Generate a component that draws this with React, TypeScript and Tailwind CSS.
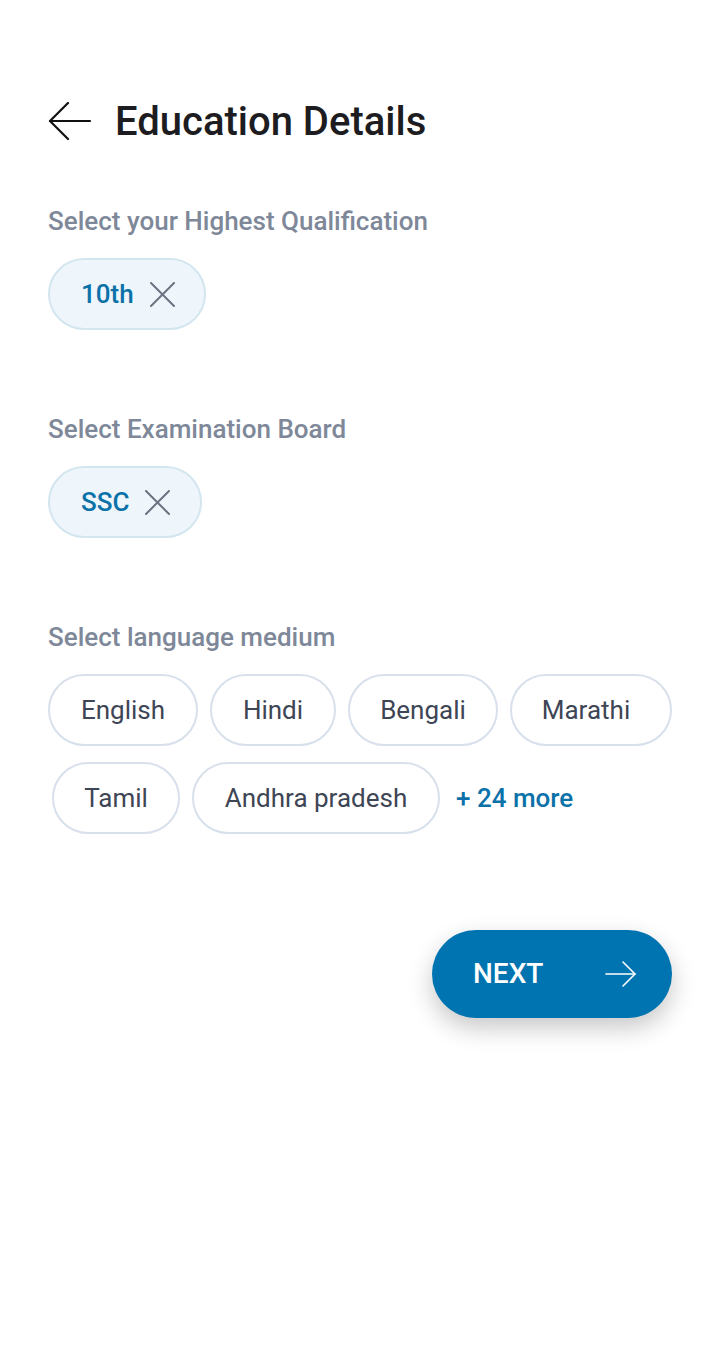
import React from 'react';

function BackArrow() {
  return (
    <svg width="44" height="40" viewBox="0 0 44 40" fill="none" stroke="#111" strokeWidth="2.2" strokeLinecap="round" strokeLinejoin="round">
      <path d="M42 19H2" />
      <path d="M20 1 2 19l18 18" />
    </svg>
  );
}

function CloseIcon() {
  return (
    <svg width="25" height="25" viewBox="0 0 25 25" fill="none" stroke="#6b7280" strokeWidth="2" strokeLinecap="round">
      <path d="M1 1l23 23M24 1 1 24" />
    </svg>
  );
}

function NextArrow() {
  return (
    <svg width="32" height="28" viewBox="0 0 32 28" fill="none" stroke="#fff" strokeWidth="1.6" strokeLinecap="round" strokeLinejoin="round">
      <path d="M1 14h29" />
      <path d="M18 2l12 12-12 12" />
    </svg>
  );
}

function SelectedChip({ label, width }: { label: string; width: string }) {
  return (
    <div className={`flex h-[72px] items-center gap-[16px] rounded-full border-2 border-[#d3e6f0] bg-[#eff6fb] pl-[31px] ${width}`}>
      <span className="text-[26px] font-medium text-[#0b72a9]">{label}</span>
      <CloseIcon />
    </div>
  );
}

function Chip({ label, width, extra = '' }: { label: string; width: string; extra?: string }) {
  return (
    <div className={`flex h-[72px] items-center justify-center rounded-full border-2 border-[#d8e0ec] bg-white text-[26px] text-[#3e4555] ${width} ${extra}`}>
      {label}
    </div>
  );
}

export default function App() {
  return (
    <div className="min-h-[1360px] bg-white pl-12 pr-12 pt-[100px]" style={{ fontFamily: 'Roboto, "Noto Sans", sans-serif' }}>
      <header className="flex h-11 items-center">
        <BackArrow />
        <h1 className="ml-[23px] text-[40px] font-medium leading-none text-[#1c1c21]">Education Details</h1>
      </header>

      <section className="mt-[61px]">
        <h2 className="text-[26px] font-medium leading-8 text-[#7e8899]">Select your Highest Qualification</h2>
        <div className="mt-[21px] flex">
          <SelectedChip label="10th" width="w-[158px]" />
        </div>
      </section>

      <section className="mt-[83px]">
        <h2 className="text-[26px] font-medium leading-8 text-[#7e8899]">Select Examination Board</h2>
        <div className="mt-[21px] flex">
          <SelectedChip label="SSC" width="w-[154px]" />
        </div>
      </section>

      <section className="mt-[83px]">
        <h2 className="text-[26px] font-medium leading-8 text-[#7e8899]">Select language medium</h2>
        <div className="mt-[21px] flex gap-3">
          <Chip label="English" width="w-[150px]" />
          <Chip label="Hindi" width="w-[126px]" />
          <Chip label="Bengali" width="w-[150px]" />
          <Chip label="Marathi" width="w-[162px]" extra="pr-[10px]" />
        </div>
        <div className="ml-1 mt-4 flex items-center gap-3">
          <Chip label="Tamil" width="w-[128px]" />
          <Chip label="Andhra pradesh" width="w-[248px]" />
          <span className="ml-1 text-[26px] font-medium text-[#0b72a9]">+ 24 more</span>
        </div>
      </section>

      <div className="mt-[96px] flex justify-end">
        <button className="flex h-[88px] w-[240px] items-center justify-between rounded-full bg-[#0074b0] pl-[41px] pr-[35px] text-[28px] font-medium text-white shadow-[0_10px_24px_rgba(0,0,0,0.22)]">
          <span>NEXT</span>
          <NextArrow />
        </button>
      </div>
    </div>
  );
}
